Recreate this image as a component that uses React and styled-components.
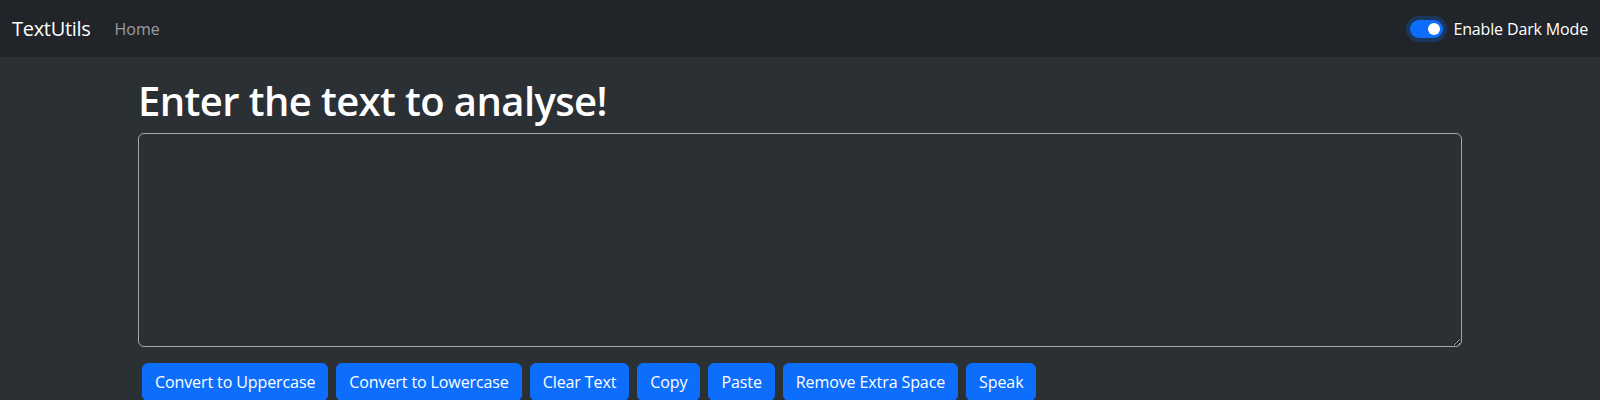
import React, { useState } from "react";
import styled, { createGlobalStyle } from "styled-components";

const GlobalStyle = createGlobalStyle`
  html, body { margin: 0; padding: 0; }
  body {
    background: #2b3035;
    color: #fff;
    font-family: "Open Sans", "Noto Sans", sans-serif;
    font-size: 16px;
    line-height: 1.5;
  }
  * { box-sizing: border-box; }
`;

const Navbar = styled.nav`
  height: 57px;
  background: #212529;
  display: flex;
  align-items: center;
  justify-content: space-between;
  padding: 0 12px;
`;

const Left = styled.div`
  display: flex;
  align-items: center;
`;

const Brand = styled.a`
  color: #fff;
  font-size: 20px;
  line-height: 30px;
  margin-right: 16px;
  text-decoration: none;
  letter-spacing: -0.3px;
`;

const NavLink = styled.a`
  color: rgba(255, 255, 255, 0.55);
  font-size: 16px;
  padding: 8px;
  text-decoration: none;
`;

const SwitchWrap = styled.label`
  display: flex;
  align-items: center;
  gap: 10px;
  color: #fff;
  font-size: 16px;
  cursor: pointer;
  letter-spacing: -0.15px;
`;

const Track = styled.span`
  position: relative;
  width: 33px;
  height: 18px;
  border-radius: 9px;
  background: ${(p) => (p.$on ? "#0d6efd" : "#495057")};
  box-shadow: 0 0 0 4px rgba(13, 110, 253, 0.25);
  display: inline-block;
`;

const Knob = styled.span`
  position: absolute;
  top: 3px;
  left: ${(p) => (p.$on ? "18px" : "3px")};
  width: 12px;
  height: 12px;
  border-radius: 50%;
  background: #fff;
`;

const Container = styled.main`
  width: 1324px;
  margin: 0 auto;
  padding-top: 20px;
`;

const Title = styled.h1`
  margin: 0 0 8px;
  font-size: 40px;
  line-height: 48px;
  font-weight: 600;
  letter-spacing: -0.6px;
  color: #fff;
`;

const TextArea = styled.textarea`
  display: block;
  width: 100%;
  height: 214px;
  background: #2b3035;
  color: #fff;
  color-scheme: dark;
  border: 1px solid #a3a6a9;
  border-radius: 6px;
  padding: 6px 12px;
  font: inherit;
  resize: vertical;
  outline: none;
`;

const ButtonRow = styled.div`
  display: flex;
  gap: 8px;
  padding: 16px 4px 0;
`;

const Button = styled.button`
  background: #0d6efd;
  color: #fff;
  border: 1px solid #0d6efd;
  border-radius: 6px;
  padding: 6px 12px;
  height: 38px;
  font-family: inherit;
  font-size: 16px;
  line-height: 24px;
  letter-spacing: -0.1px;
  cursor: pointer;
  white-space: nowrap;
`;

const labels = [
  "Convert to Uppercase",
  "Convert to Lowercase",
  "Clear Text",
  "Copy",
  "Paste",
  "Remove Extra Space",
  "Speak",
];

export default function App() {
  const [dark, setDark] = useState(true);
  const [text, setText] = useState("");
  return (
    <>
      <GlobalStyle />
      <Navbar>
        <Left>
          <Brand href="#">TextUtils</Brand>
          <NavLink href="#">Home</NavLink>
        </Left>
        <SwitchWrap onClick={() => setDark(!dark)}>
          <Track $on={dark}>
            <Knob $on={dark} />
          </Track>
          Enable Dark Mode
        </SwitchWrap>
      </Navbar>
      <Container>
        <Title>Enter the text to analyse!</Title>
        <TextArea value={text} onChange={(e) => setText(e.target.value)} />
        <ButtonRow>
          {labels.map((l) => (
            <Button key={l}>{l}</Button>
          ))}
        </ButtonRow>
      </Container>
    </>
  );
}
